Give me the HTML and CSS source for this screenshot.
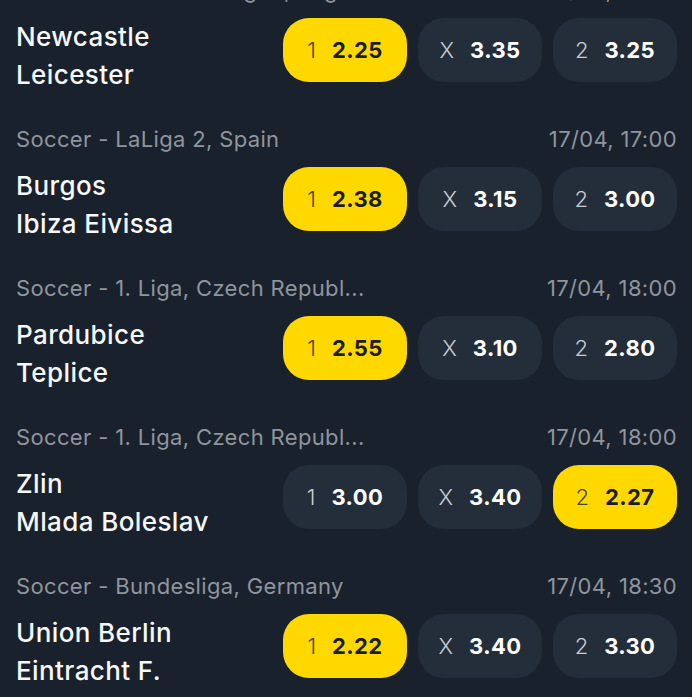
FILE: index.html
```html
<!DOCTYPE html>
<html lang="en">

<head>
	<meta charset="UTF-8">
	<meta name="viewport" content="width=device-width, initial-scale=1.0">
	<title>Upcoming Matches</title>
	<link rel="stylesheet" href="styles.css">
</head>

<body>
	<div class="match-list">
		<div class="match">
			<div class="meta">
				<span class="league">Soccer - Premier League, England</span>
				<span class="time">17/04, 16:30</span>
			</div>
			<div class="row">
				<div class="teams">
					<div>Newcastle</div>
					<div>Leicester</div>
				</div>
				<div class="odds">
					<button class="odd selected"><span class="label">1</span><span class="price">2.25</span></button>
					<button class="odd"><span class="label">X</span><span class="price">3.35</span></button>
					<button class="odd"><span class="label">2</span><span class="price">3.25</span></button>
				</div>
			</div>
		</div>

		<div class="match">
			<div class="meta">
				<span class="league">Soccer - LaLiga 2, Spain</span>
				<span class="time">17/04, 17:00</span>
			</div>
			<div class="row">
				<div class="teams">
					<div>Burgos</div>
					<div>Ibiza Eivissa</div>
				</div>
				<div class="odds">
					<button class="odd selected"><span class="label">1</span><span class="price">2.38</span></button>
					<button class="odd"><span class="label">X</span><span class="price">3.15</span></button>
					<button class="odd"><span class="label">2</span><span class="price">3.00</span></button>
				</div>
			</div>
		</div>

		<div class="match">
			<div class="meta">
				<span class="league">Soccer - 1. Liga, Czech Republ...</span>
				<span class="time">17/04, 18:00</span>
			</div>
			<div class="row">
				<div class="teams">
					<div>Pardubice</div>
					<div>Teplice</div>
				</div>
				<div class="odds">
					<button class="odd selected"><span class="label">1</span><span class="price">2.55</span></button>
					<button class="odd"><span class="label">X</span><span class="price">3.10</span></button>
					<button class="odd"><span class="label">2</span><span class="price">2.80</span></button>
				</div>
			</div>
		</div>

		<div class="match">
			<div class="meta">
				<span class="league">Soccer - 1. Liga, Czech Republ...</span>
				<span class="time">17/04, 18:00</span>
			</div>
			<div class="row">
				<div class="teams">
					<div>Zlin</div>
					<div>Mlada Boleslav</div>
				</div>
				<div class="odds">
					<button class="odd"><span class="label">1</span><span class="price">3.00</span></button>
					<button class="odd"><span class="label">X</span><span class="price">3.40</span></button>
					<button class="odd selected"><span class="label">2</span><span class="price">2.27</span></button>
				</div>
			</div>
		</div>

		<div class="match">
			<div class="meta">
				<span class="league">Soccer - Bundesliga, Germany</span>
				<span class="time">17/04, 18:30</span>
			</div>
			<div class="row">
				<div class="teams">
					<div>Union Berlin</div>
					<div>Eintracht F.</div>
				</div>
				<div class="odds">
					<button class="odd selected"><span class="label">1</span><span class="price">2.22</span></button>
					<button class="odd"><span class="label">X</span><span class="price">3.40</span></button>
					<button class="odd"><span class="label">2</span><span class="price">3.30</span></button>
				</div>
			</div>
		</div>
	</div>
</body>

</html>
```

FILE: styles.css
```css
body {
	font-family: Inter, "Noto Sans", sans-serif;
	background-color: #19212c;
	color: #f7f8f9;
	margin: 0;
	padding: 0;
	overflow: hidden;
}

.match-list {
	margin-top: -25px;
	padding: 0 15px 0 16px;
}

.match {
	padding-bottom: 30px;
}

.meta {
	display: flex;
	justify-content: space-between;
	height: 30px;
	line-height: 30px;
	font-size: 22px;
	letter-spacing: 0.35px;
	color: #8f959d;
	margin-bottom: 13px;
}

.row {
	display: flex;
	justify-content: space-between;
	align-items: flex-start;
}

.teams {
	font-size: 26px;
	font-weight: 500;
	letter-spacing: 0.4px;
	line-height: 38px;
}

.odds {
	display: flex;
	gap: 11px;
}

.odd {
	display: flex;
	align-items: center;
	justify-content: center;
	gap: 16px;
	width: 124px;
	height: 64px;
	border: none;
	border-radius: 26px;
	background-color: #242e3a;
	color: #ffffff;
	font-family: inherit;
	padding: 0;
	cursor: pointer;
}

.odd .label {
	font-size: 22px;
	font-weight: 300;
	color: #c9cdd2;
}

.odd .price {
	font-size: 22px;
	font-weight: 700;
	letter-spacing: 0.4px;
}

.odd.selected {
	background-color: #ffd800;
	color: #1b1d20;
}

.odd.selected .label {
	color: #4a4630;
}
```
